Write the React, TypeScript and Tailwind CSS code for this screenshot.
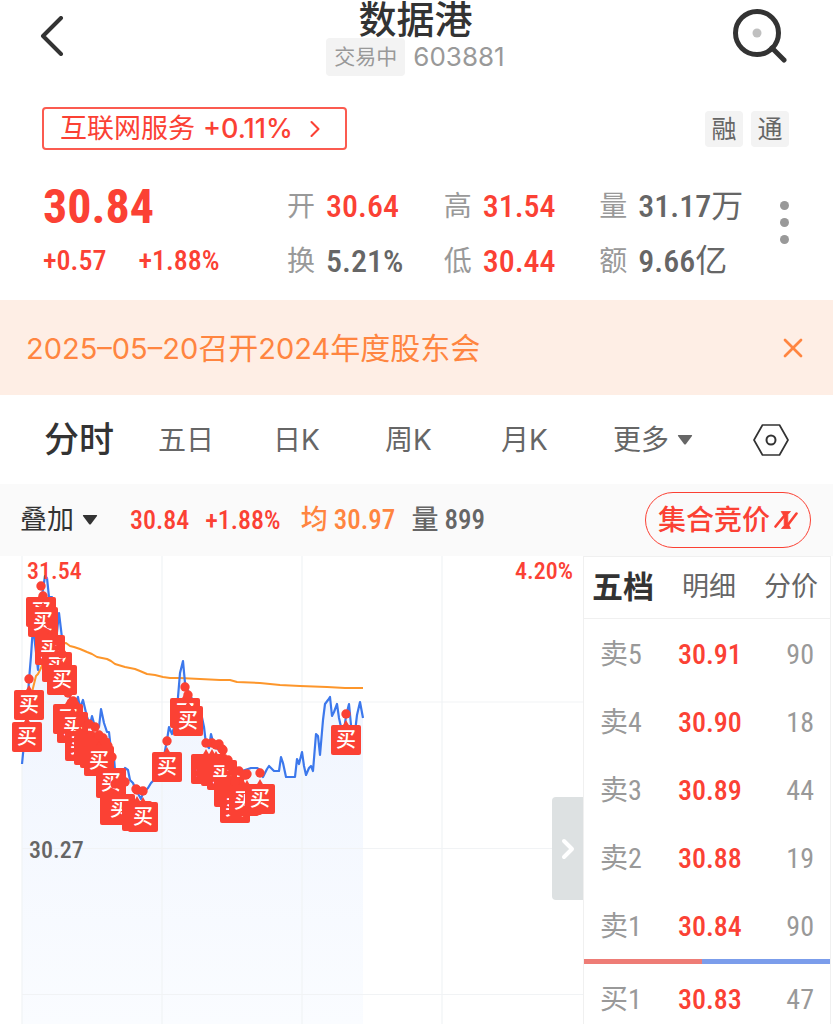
import React from 'react';
import { ChevronRight, X } from 'lucide-react';

const NUM = "font-['Roboto_Condensed','Roboto','Noto_Sans_CJK_SC',sans-serif]";

const quotes = [
  { label: '开', value: '30.64', up: true },
  { label: '高', value: '31.54', up: true },
  { label: '量', value: '31.17', unit: '万', up: false },
  { label: '换', value: '5.21%', up: false },
  { label: '低', value: '30.44', up: true },
  { label: '额', value: '9.66', unit: '亿', up: false },
];

const asks = [
  { level: '卖5', price: '30.91', volume: '90' },
  { level: '卖4', price: '30.90', volume: '18' },
  { level: '卖3', price: '30.89', volume: '44' },
  { level: '卖2', price: '30.88', volume: '19' },
  { level: '卖1', price: '30.84', volume: '90' },
];

const bids = [{ level: '买1', price: '30.83', volume: '47' }];

const pricePoints =
  '22,208 25,178 27,152 29,124 31,100 33,70 36,96 38,114 40,84 42,40 45,20 47,22 49,41 52,41 54,60 57,76 59,57 62,82 66,114 70,142 74,150 78,141 80,152 83,144 87,161 90,169 92,160 95,171 99,171 101,153 104,167 107,176 109,176 111,194 114,202 115,214 120,222 125,212 128,214 130,224 133,227 135,232 141,243 143,237 148,232 151,227 153,225 160,214 164,200 167,184 169,171 172,178 175,168 178,141 180,117 183,105 185,127 189,138 193,144 200,152 204,171 206,188 209,192 211,178 214,190 222,196 230,208 239,216 245,214 251,212 257,212 260,214 263,221 267,213 269,210 274,215 279,215 281,201 283,207 286,221 295,221 297,203 299,208 302,196 304,210 306,219 309,212 311,210 313,215 316,178 318,180 320,199 323,164 325,148 328,144 330,141 332,160 334,156 337,148 339,162 341,171 344,175 346,160 349,148 351,169 355,176 357,159 360,146 363,162';

const averagePoints =
  '22,184 27,160 33,132 36,120 38,118 41,112 45,102 50,94 56,90 62,88 66,87 70,90 74,91 80,93 87,96 92,98 97,101 102,102 107,103 111,105 115,108 125,111 135,113 140,115 147,118 155,119 163,121 170,122 180,122 200,123 220,124 230,124 237,126 260,127 280,129 300,130 327,131 345,132 363,132';

// buy markers, oldest first so that later ones cover the earlier ones;
// the glyph is left out where a later marker hides it
const markers = [
  { x: 27, y: 181, glyph: true },
  { x: 29, y: 149, glyph: true },
  { x: 41, y: 56, glyph: true },
  { x: 43, y: 66, glyph: true },
  { x: 50, y: 94, glyph: true },
  { x: 57, y: 111, glyph: true },
  { x: 62, y: 124, glyph: true },
  { x: 68, y: 163, glyph: true },
  { x: 72, y: 172, glyph: false },
  { x: 73, y: 171, glyph: true },
  { x: 80, y: 190, glyph: true },
  { x: 89, y: 194, glyph: false },
  { x: 95, y: 197, glyph: false },
  { x: 99, y: 205, glyph: true },
  { x: 111, y: 227, glyph: true },
  { x: 115, y: 254, glyph: false },
  { x: 120, y: 253, glyph: true },
  { x: 137, y: 260, glyph: false },
  { x: 143, y: 261, glyph: true },
  { x: 167, y: 211, glyph: true },
  { x: 185, y: 157, glyph: true },
  { x: 188, y: 165, glyph: true },
  { x: 206, y: 213, glyph: true },
  { x: 212, y: 213, glyph: false },
  { x: 216, y: 215, glyph: false },
  { x: 222, y: 219, glyph: true },
  { x: 229, y: 236, glyph: false },
  { x: 235, y: 252, glyph: true },
  { x: 247, y: 244, glyph: false },
  { x: 244, y: 245, glyph: true },
  { x: 260, y: 243, glyph: true },
  { x: 346, y: 184, glyph: true },
];

const extraDots = [
  [75, 149], [103, 182], [108, 190], [112, 201], [125, 226], [136, 233],
  [219, 188], [223, 194], [228, 204], [239, 215], [246, 219],
];

const SearchIcon = () => (
  <svg className="w-14 h-14" viewBox="0 0 56 56" fill="none">
    <circle cx="26" cy="25" r="21.5" stroke="#333333" strokeWidth="5" />
    <circle cx="26" cy="25" r="4.5" fill="#c0c0c0" />
    <path d="M41 40L53 52" stroke="#333333" strokeWidth="5" strokeLinecap="round" />
  </svg>
);

const SettingsIcon = () => (
  <svg className="w-9 h-8" viewBox="0 0 36 32" fill="none" stroke="#333333" strokeLinejoin="round">
    <path d="M9.5 1H26.5L35 16L26.5 31H9.5L1 16Z" strokeWidth="1.7" />
    <circle cx="18" cy="16" r="4.5" strokeWidth="2" />
  </svg>
);

const AuctionIcon = () => (
  <svg className="w-6 h-5" viewBox="0 0 24 20" fill="#fb4134" stroke="#fb4134" strokeLinecap="round" strokeLinejoin="round">
    <path d="M1.5 16.5L10.5 5.5M22.5 3.5L13 16" strokeWidth="2.6" />
    <path d="M7.5 1.5H16.5L13.8 4.5V13L16.5 18.5H7.5L10.2 15.5V7Z" strokeWidth="0.8" />
  </svg>
);

const Triangle = ({ className }: { className: string }) => (
  <svg className={`w-4 h-3 ${className}`} viewBox="0 0 16 12" fill="currentColor">
    <path d="M1.5 1H14.5Q15.5 1 15 2L9 10Q8 11 7 10L1 2Q.5 1 1.5 1Z" />
  </svg>
);

const Marker = ({ x, y, glyph }: { x: number; y: number; glyph: boolean }) => (
  <g>
    <circle cx={x} cy={y - 26} r="4.7" fill="#fb4134" />
    <path d={`M${x} ${y - 20}l4 7h-8z`} fill="#fb4134" />
    <rect x={x - 15} y={y - 15} width="30" height="30" rx="2" fill="#fb4134" />
    {glyph && (
      <text x={x} y={y + 7} textAnchor="middle" fontSize="20" fontWeight="500" fill="#ffffff">
        买
      </text>
    )}
  </g>
);

const Chart = () => (
  <svg className="block w-full h-auto" viewBox="0 0 583 468" role="img" aria-label="分时走势">
    <defs>
      <linearGradient id="area" x1="0" y1="0" x2="0" y2="1">
        <stop offset="0" stopColor="#edf3fe" />
        <stop offset="1" stopColor="#fafcff" />
      </linearGradient>
    </defs>
    <polygon points={`22,468 ${pricePoints} 363,468`} fill="url(#area)" />
    <path
      d="M22 0V468M162 0V468M302 0V468M442 0V468M22 146H583M22 292.5H583M22 438.5H583"
      stroke="#f1f3f5"
      strokeWidth="1.2"
    />
    <polyline points={averagePoints} fill="none" stroke="#fd962b" strokeWidth="2" strokeLinejoin="round" />
    <polyline points={pricePoints} fill="none" stroke="#3c78ec" strokeWidth="2.2" strokeLinejoin="round" />
    <g className={NUM} fontSize="24" fontWeight="500">
      <text x="27" y="23" fill="#fb4134">31.54</text>
      <text x="573" y="23" fill="#fb4134" textAnchor="end">4.20%</text>
      <text x="29" y="302" fill="#666666">30.27</text>
    </g>
    {extraDots.map(([x, y]) => (
      <circle key={`${x}-${y}`} cx={x} cy={y} r="4.7" fill="#fb4134" />
    ))}
    {markers.map((marker) => (
      <Marker key={`${marker.x}-${marker.y}`} {...marker} />
    ))}
  </svg>
);

const OrderRow = ({ level, price, volume }: { level: string; price: string; volume: string }) => (
  <tr className="h-[68px]">
    <th scope="row" className="pt-1 pl-4 text-left font-normal text-[#999999]">{level}</th>
    <td className="pt-1 font-medium text-[#fb4134]">{price}</td>
    <td className="pt-1 pr-4 text-right text-[#999999]">{volume}</td>
  </tr>
);

const App = () => {
  return (
    <div className="bg-white text-[#333333] font-['Inter','Noto_Sans_CJK_SC',sans-serif]">
      {/* Header */}
      <header className="flex items-start justify-between pl-10 pr-[46px]">
        <button aria-label="返回" className="w-14 pt-4">
          <svg className="w-6 h-10" viewBox="0 0 24 40" fill="none">
            <path d="M21 2L3 20L21 38" stroke="#333333" strokeWidth="4" strokeLinecap="round" strokeLinejoin="round" />
          </svg>
        </button>
        <div className="flex flex-col items-center pl-1">
          <h1 className="text-[38px] leading-[38px] font-medium">数据港</h1>
          <div className="flex items-center gap-2">
            <span className="rounded bg-[#f3f3f3] px-2 text-[21px] leading-[38px] text-[#999999]">交易中</span>
            <span className="text-[26px] leading-[38px] text-[#999999]">603881</span>
          </div>
        </div>
        <button aria-label="搜索" className="pt-2">
          <SearchIcon />
        </button>
      </header>

      {/* Sector */}
      <div className="mt-[31px] flex items-center justify-between pl-[42px] pr-11">
        <a href="#sector" className="flex h-[43px] items-center rounded-sm border-2 border-[#fb5b50] px-4 text-[27px] leading-none text-[#fb4134]">
          互联网服务
          <span className="ml-2 font-medium">+0.11%</span>
          <ChevronRight className="ml-2 size-7" strokeWidth={1.8} />
        </a>
        <div className="flex gap-2 text-[25px] leading-9 text-[#666666]">
          <span className="w-[38px] rounded-sm bg-[#f3f3f3] text-center">融</span>
          <span className="w-[38px] rounded-sm bg-[#f3f3f3] text-center">通</span>
        </div>
      </div>

      {/* Quote */}
      <section className="mt-7 flex h-[122px] items-start pl-[43px] pr-8">
        <div className={`w-[244px] shrink-0 text-[#fb4134] ${NUM}`}>
          <p className="text-[48px] leading-[58px] font-bold">30.84</p>
          <p className="flex gap-8 text-[28px] leading-[50px] font-medium">
            <span>+0.57</span>
            <span>+1.88%</span>
          </p>
        </div>
        <dl className="grid flex-1 grid-cols-[157fr_156fr_169fr]">
          {quotes.map(({ label, value, unit, up }) => (
            <div key={label} className="flex h-[55px] items-center whitespace-nowrap">
              <dt className="w-[39px] text-[28px] text-[#999999]">{label}</dt>
              <dd className={`flex items-center text-[32px] font-medium ${NUM} ${up ? 'text-[#fb4134]' : 'text-[#666666]'}`}>
                {value}
                {unit && <span className="font-normal">{unit}</span>}
              </dd>
            </div>
          ))}
        </dl>
        <button aria-label="更多行情" className="flex flex-col gap-2 px-3 pt-[23px]">
          <span className="size-[9px] rounded-full bg-[#999999]" />
          <span className="size-[9px] rounded-full bg-[#999999]" />
          <span className="size-[9px] rounded-full bg-[#999999]" />
        </button>
      </section>

      {/* Notice */}
      <div className="flex h-[95px] items-center justify-between bg-[#feeee5] pl-[26px] pr-6 text-[#ff8540]">
        <p className="text-[30px] leading-none">
          <span className="text-[29px]">2025–05–20</span>召开<span className="text-[29px]">2024</span>年度股东会
        </p>
        <button aria-label="关闭">
          <X className="size-8" strokeWidth={2} />
        </button>
      </div>

      {/* Period tabs */}
      <nav className="grid h-[89px] grid-cols-[114fr_115fr_112fr_116fr_112fr_140fr_36px] items-center px-11 text-[28px] text-[#666666]">
        <button className="text-left text-[35px] font-medium text-[#333333]">分时</button>
        <button className="text-left">五日</button>
        <button className="text-left">日K</button>
        <button className="text-left">周K</button>
        <button className="text-left">月K</button>
        <button className="flex items-center gap-2">
          更多
          <Triangle className="text-[#666666]" />
        </button>
        <button aria-label="设置">
          <SettingsIcon />
        </button>
      </nav>

      {/* Indicator strip */}
      <div className="flex h-[72px] items-center bg-[#fafafa] pl-5 pr-[22px] text-[27px]">
        <button className="flex items-center gap-2">
          叠加
          <Triangle className="text-[#333333]" />
        </button>
        <div className={`ml-8 flex items-center font-medium ${NUM}`}>
          <span className="text-[26px] text-[#fb4134]">30.84</span>
          <span className="ml-4 text-[26px] text-[#fb4134]">+1.88%</span>
          <span className="ml-5 text-[#ff8540]">均 30.97</span>
          <span className="ml-4 text-[#666666]">量 899</span>
        </div>
        <button className="ml-auto flex h-14 items-center gap-1 rounded-full border border-[#fb4134] px-3 text-[28px] font-medium text-[#fb4134]">
          集合竞价
          <AuctionIcon />
        </button>
      </div>

      <main className="flex items-start">
        {/* Chart */}
        <div className="relative min-w-0 flex-1">
          <Chart />
          <button
            aria-label="收起盘口"
            className="absolute right-0 top-[241px] flex h-[103px] w-[31px] items-center justify-center rounded-l bg-[#dde1e2] text-white"
          >
            <ChevronRight className="size-8 shrink-0" strokeWidth={3} />
          </button>
        </div>

        {/* Order book */}
        <aside className="mr-0.5 h-[468px] w-[248px] shrink-0 overflow-hidden border-x border-[#f0f0f0]">
          <div className="flex h-[63px] items-center justify-between border-y border-[#f0f0f0] pl-2 pr-3 text-[27px] text-[#666666]">
            <button className="text-[31px] font-bold text-[#333333]">五档</button>
            <button>明细</button>
            <button>分价</button>
          </div>
          <table className={`w-full table-fixed text-[28px] leading-none ${NUM}`}>
            <colgroup>
              <col className="w-[94px]" />
              <col />
              <col className="w-[72px]" />
            </colgroup>
            <tbody>
              {asks.map((row) => (
                <OrderRow key={row.level} {...row} />
              ))}
            </tbody>
          </table>
          <div className="flex h-[5px]">
            <span className="w-[48%] bg-[#ee7c76]" />
            <span className="flex-1 bg-[#7b9deb]" />
          </div>
          <table className={`w-full table-fixed text-[28px] leading-none ${NUM}`}>
            <colgroup>
              <col className="w-[94px]" />
              <col />
              <col className="w-[72px]" />
            </colgroup>
            <tbody>
              {bids.map((row) => (
                <OrderRow key={row.level} {...row} />
              ))}
            </tbody>
          </table>
        </aside>
      </main>
    </div>
  );
};

export default App;
